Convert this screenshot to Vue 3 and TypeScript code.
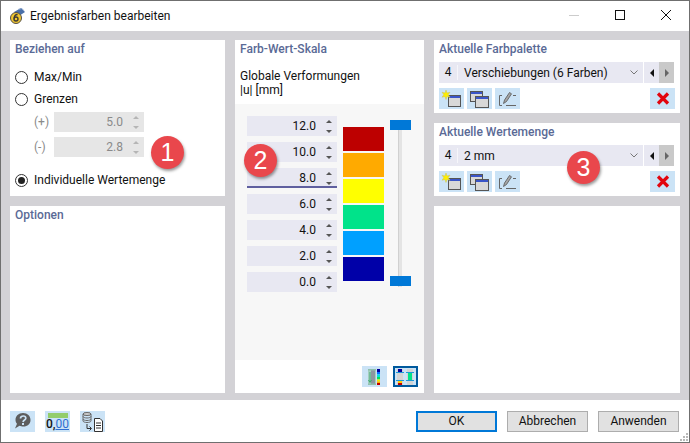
<script setup lang="ts">
const scale = [
  { value: '12.0' },
  { value: '10.0' },
  { value: '8.0', active: true },
  { value: '6.0' },
  { value: '4.0' },
  { value: '2.0' },
  { value: '0.0' }
]
const colors = ['#bd0000', '#ffaa00', '#ffff00', '#00e38a', '#00a0ff', '#0000a8']
const pickers = [
  { title: 'Aktuelle Farbpalette', no: '4', name: 'Verschiebungen (6 Farben)' },
  { title: 'Aktuelle Wertemenge', no: '4', name: '2 mm' }
]
</script>

<template>
  <div class="window">
    <header class="titlebar">
      <svg class="app-icon" width="18" height="18" viewBox="0 0 18 18">
        <path d="M5 5 L12 1 L16 5 L10 9 Z" fill="#4a6fa8" />
        <path d="M9 2.5 L13 1.5 L15 4" fill="none" stroke="#8fa9cf" />
        <circle cx="7" cy="11" r="5.5" fill="#f0c62e" stroke="#55504a" />
        <circle cx="7" cy="12" r="2" fill="none" stroke="#3c3a36" stroke-width="1.4" />
        <path d="M5.2 11.5 C5.2 8.5 7 7.5 8.6 7.5" fill="none" stroke="#3c3a36" stroke-width="1.4" />
      </svg>
      <span class="title">Ergebnisfarben bearbeiten</span>
      <div class="win-buttons">
        <svg width="10" height="10" viewBox="0 0 10 10" class="win-min"><path d="M0 5.5H10" stroke="#cccccc" /></svg>
        <svg width="10" height="10" viewBox="0 0 10 10" class="win-max"><rect x="0.5" y="0.5" width="9" height="9" fill="none" stroke="#111" /></svg>
        <svg width="10" height="10" viewBox="0 0 10 10" class="win-close"><path d="M0 0L10 10M10 0L0 10" stroke="#111" /></svg>
      </div>
    </header>

    <main class="content">
      <div class="col col-left">
        <section class="panel refer">
          <h3>Beziehen auf</h3>
          <label class="radio first"><i class="dot"></i>Max/Min</label>
          <label class="radio"><i class="dot"></i>Grenzen</label>
          <div class="limit first-limit">
            <span>(+)</span>
            <div class="field disabled">5.0<span class="spin"><b class="up"></b><b class="down"></b></span></div>
          </div>
          <div class="limit">
            <span>(-)</span>
            <div class="field disabled">2.8<span class="spin"><b class="up"></b><b class="down"></b></span></div>
          </div>
          <label class="radio last"><i class="dot on"></i>Individuelle Wertemenge</label>
        </section>
        <section class="panel grow">
          <h3>Optionen</h3>
        </section>
      </div>

      <section class="panel col-mid">
        <h3>Farb-Wert-Skala</h3>
        <div class="scale-head">Globale Verformungen<br />|u| [mm]</div>
        <div class="scale-area">
          <div class="values">
            <div v-for="row in scale" :key="row.value" class="field" :class="{ active: row.active }">
              {{ row.value }}<span class="spin"><b class="up"></b><b class="down"></b></span>
            </div>
          </div>
          <div class="bars">
            <div v-for="c in colors" :key="c" class="bar" :style="{ background: c }"></div>
          </div>
          <div class="slider">
            <div class="track"></div>
            <div class="handle top"></div>
            <div class="handle bottom"></div>
          </div>
        </div>
        <div class="scale-tools">
          <button class="tool">
            <svg width="21" height="20" viewBox="0 0 21 20">
              <rect x="4" y="2" width="8" height="16" fill="#a5cfc0" />
              <rect x="7" y="2" width="4" height="16" fill="#8c97a0" />
              <path d="M6 5V15M4.500 13L6 15.500L7.500 13" stroke="#3fa873" fill="none" />
              <rect x="4" y="2" width="8" height="1.500" fill="#8fc0ac" />
              <rect x="4" y="16.500" width="8" height="1.500" fill="#8fc0ac" />
              <rect x="13" y="2" width="3" height="3" fill="#00009e" />
              <rect x="13" y="5" width="3" height="2.500" fill="#0070ff" />
              <rect x="13" y="7.500" width="3" height="2.500" fill="#00e0e0" />
              <rect x="13" y="10" width="3" height="2.500" fill="#00e060" />
              <rect x="13" y="12.500" width="3" height="2" fill="#eeee00" />
              <rect x="13" y="14.500" width="3" height="1.500" fill="#ffaa00" />
              <rect x="13" y="16" width="3" height="2" fill="#c00000" />
            </svg>
          </button>
          <button class="tool selected">
            <svg width="21" height="20" viewBox="0 0 21 20">
              <rect x="2" y="2" width="6" height="16" fill="#d4d4d4" />
              <rect x="12" y="2" width="6" height="16" fill="#d4d4d4" />
              <rect x="3" y="2" width="4" height="3" fill="#00009e" />
              <rect x="3" y="14" width="4" height="2" fill="#ffcc00" />
              <rect x="3" y="16" width="4" height="2" fill="#c00000" />
              <rect x="13" y="6" width="4" height="7" fill="#00e38a" />
              <path d="M1 5.500H9M1 13.500H9M11 5.500H19M11 13.500H19" stroke="#1c9ad8" />
            </svg>
          </button>
        </div>
      </section>

      <div class="col col-right">
        <section v-for="p in pickers" :key="p.title" class="panel picker">
          <h3>{{ p.title }}</h3>
          <div class="combo-row">
            <div class="combo">
              <span class="no">{{ p.no }}</span>
              <span class="name">{{ p.name }}</span>
              <svg width="8" height="5" viewBox="0 0 8 5" class="caret"><path d="M0.500 0.500L4 4L7.500 0.500" fill="none" stroke="#777" /></svg>
            </div>
            <div class="step"><b class="left"></b></div>
            <div class="step off"><b class="right"></b></div>
          </div>
          <div class="tool-row">
            <button class="tool">
              <svg width="21" height="20" viewBox="0 0 21 20">
                <rect x="7.500" y="6.500" width="12" height="11" fill="#d8d8d8" stroke="#555" />
                <rect x="8" y="7" width="11" height="2" fill="#3a55c8" />
                <path d="M5 1L6 4L9 3.200L7.200 5.700L9 8.200L6 7.500L5 10.500L4 7.500L1 8.200L2.800 5.700L1 3.200L4 4Z" fill="#ffee00" stroke="#c9c25a" stroke-width="0.500" />
              </svg>
            </button>
            <button class="tool">
              <svg width="21" height="20" viewBox="0 0 21 20">
                <rect x="1.500" y="2.500" width="12" height="10" fill="#d8d8d8" stroke="#555" />
                <rect x="2" y="3" width="11" height="2" fill="#3a55c8" />
                <rect x="6.500" y="7.500" width="13" height="11" fill="#d8d8d8" stroke="#555" />
                <rect x="7" y="8" width="12" height="2" fill="#3a55c8" />
              </svg>
            </button>
            <button class="tool">
              <svg width="21" height="20" viewBox="0 0 21 20">
                <path d="M5 6.500H2.500V16.500H5M9 16.500H19M16 6.500H19" fill="none" stroke="#666" />
                <path d="M6.500 14.500L7.500 11L12.500 3.500L14.500 4.800L9.500 12.500Z" fill="#a6a6a6" stroke="#555" stroke-width="0.800" />
              </svg>
            </button>
            <button class="tool del">
              <svg width="14" height="13" viewBox="0 0 14 13"><path d="M2 1.500L12 11.500M12 1.500L2 11.500" stroke="#e2060f" stroke-width="3.200" /></svg>
            </button>
          </div>
        </section>
        <section class="panel grow"></section>
      </div>
    </main>

    <footer class="footer">
      <button class="tool">
        <svg width="21" height="20" viewBox="0 0 21 20">
          <path d="M11 2C15.500 2 18.500 5 18.500 9C18.500 13 15.500 15.500 11.500 15.500C10 15.500 8.500 15.200 7.500 14.700L3 17.500L5 12.800C4 11.700 3.500 10.500 3.500 9C3.500 5 6.500 2 11 2Z" fill="#5d5d5d" />
          <path d="M8.500 7.500C8.500 6 9.700 5 11.200 5C12.800 5 13.800 6 13.800 7.200C13.800 9 11.300 9 11 11" fill="none" stroke="#cbe3f6" stroke-width="1.700" />
          <rect x="10" y="12" width="2" height="2" fill="#cbe3f6" />
        </svg>
      </button>
      <button class="tool num">
        <span class="ruler"></span>
        <span class="digits">0,<u>00</u></span>
      </button>
      <button class="tool">
        <svg width="23" height="21" viewBox="0 0 23 21">
          <ellipse cx="6" cy="3" rx="4" ry="1.500" fill="#cfcfcf" stroke="#666" />
          <path d="M2 3V10C2 10.800 4 11.500 6 11.500C8 11.500 10 10.800 10 10V3M2 5.500C2 6.300 4 7 6 7C8 7 10 6.300 10 5.500M2 8C2 8.800 4 9.500 6 9.500C8 9.500 10 8.800 10 8" fill="none" stroke="#666" />
          <path d="M6 13V17.500H10M8.500 15.500L10.500 17.500L8.500 19.500" fill="none" stroke="#333" />
          <path d="M13.500 7.500H19L21.500 10V20.500H13.500Z" fill="#fff" stroke="#333" />
          <path d="M15 12H20M15 14.500H20M15 17H20" stroke="#333" />
        </svg>
      </button>
      <div class="spacer"></div>
      <button class="btn default">OK</button>
      <button class="btn">Abbrechen</button>
      <button class="btn">Anwenden</button>
      <svg class="grip" width="10" height="10" viewBox="0 0 10 10">
        <path d="M7 1h2v2H7zM4 4h2v2H4zM7 4h2v2H7zM1 7h2v2H1zM4 7h2v2H4zM7 7h2v2H7z" fill="#b8b8b8" />
      </svg>
    </footer>

    <div class="marker m1">1</div>
    <div class="marker m2">2</div>
    <div class="marker m3">3</div>
  </div>
</template>

<style>
html,
body {
  margin: 0;
  background: #fff;
}
</style>

<style scoped>
.window {
  position: relative;
  box-sizing: border-box;
  width: 690px;
  height: 443px;
  border: 1px solid #6f6f6f;
  display: flex;
  flex-direction: column;
  background: #d3d2d6;
  font-family: Roboto, 'Noto Sans', sans-serif;
  font-size: 12px;
  color: #111;
  overflow: hidden;
}
.titlebar {
  height: 30px;
  flex: none;
  background: #fff;
  display: flex;
  align-items: center;
  padding-left: 8px;
}
.app-icon {
  margin-right: 3px;
}
.title {
  font-size: 12px;
}
.win-buttons {
  margin-left: auto;
  display: flex;
  align-items: center;
  padding: 0 18px 2px 0;
  gap: 36px;
}
.content {
  flex: 1;
  display: grid;
  grid-template-columns: 215px 189px 246px;
  gap: 10px;
  padding: 9px 9px 7px 9px;
  min-height: 0;
}
.col {
  display: flex;
  flex-direction: column;
  gap: 10px;
  min-height: 0;
}
.panel {
  background: #fff;
  padding: 2px 5px;
  box-sizing: border-box;
}
.grow {
  flex: 1;
}
h3 {
  margin: 0 0 1px;
  font-size: 12px;
  font-weight: 500;
  line-height: 15px;
  color: #5a6a96;
}
.refer {
  height: 156px;
}
.radio {
  display: flex;
  align-items: center;
  height: 16px;
  margin-top: 6px;
}
.radio.first {
  margin-top: 12px;
}
.radio.last {
  margin-top: 15px;
}
.dot {
  box-sizing: border-box;
  width: 13px;
  height: 13px;
  border: 1px solid #333;
  border-radius: 50%;
  margin-right: 6px;
  display: flex;
  align-items: center;
  justify-content: center;
  background: #fff;
}
.dot.on::after {
  content: '';
  width: 7px;
  height: 7px;
  border-radius: 50%;
  background: #222;
}
.limit {
  display: flex;
  align-items: center;
  justify-content: space-between;
  width: 110px;
  margin-left: 19px;
  margin-top: 5px;
  color: #8a8a8a;
}
.first-limit {
  margin-top: 5px;
}
.field {
  box-sizing: border-box;
  width: 90px;
  height: 20px;
  background: #e8e8f2;
  display: flex;
  align-items: center;
  justify-content: flex-end;
  position: relative;
  padding-right: 21px;
  line-height: 20px;
}
.field.disabled {
  background: #e6e6e6;
  color: #8a8a8a;
}
.field.active {
  box-shadow: inset 0 -2px 0 #5f5f9f;
}
.spin {
  position: absolute;
  right: 4px;
  top: 4px;
  width: 7px;
  height: 13px;
}
.spin b {
  position: absolute;
  left: 0;
  width: 0;
  height: 0;
  border-left: 3px solid transparent;
  border-right: 3px solid transparent;
}
.spin .up {
  top: 0;
  border-bottom: 3px solid #555;
}
.spin .down {
  bottom: 0;
  border-top: 3px solid #555;
}
.disabled .spin .up {
  border-bottom-color: #b5b5b5;
}
.disabled .spin .down {
  border-top-color: #b5b5b5;
}
.col-mid {
  padding: 2px 0 0;
  display: flex;
  flex-direction: column;
}
.col-mid h3 {
  padding-left: 5px;
}
.scale-head {
  padding: 11px 0 0 5px;
  line-height: 14px;
  height: 35px;
  box-sizing: content-box;
}
.scale-area {
  flex: 1;
  background: #f7f7f7;
  display: flex;
  align-items: flex-start;
  padding: 12px 0 0 12px;
}
.values {
  display: flex;
  flex-direction: column;
  gap: 6px;
}
.bars {
  margin: 11px 0 0 6px;
  display: flex;
  flex-direction: column;
  gap: 2px;
}
.bar {
  width: 41px;
  height: 24px;
}
.slider {
  position: relative;
  margin: 4px 0 0 6px;
  width: 21px;
  height: 167px;
}
.track {
  position: absolute;
  left: 8px;
  top: 6px;
  bottom: 0;
  width: 4px;
  background: #e4e4e4;
  border-left: 1px solid #d0d0d0;
  box-sizing: border-box;
}
.handle {
  position: absolute;
  left: 0;
  width: 21px;
  height: 10px;
  background: #0078d7;
}
.handle.top {
  top: 0;
}
.handle.bottom {
  top: 156px;
}
.scale-tools {
  display: flex;
  justify-content: flex-end;
  gap: 6px;
  padding: 6px 6px 6px 0;
}
button {
  padding: 0;
  border: 0;
  font: inherit;
  color: inherit;
}
.tool {
  box-sizing: border-box;
  width: 25px;
  height: 21px;
  background: #cbe3f6;
  display: flex;
  align-items: center;
  justify-content: center;
  flex: none;
}
.tool.selected {
  border: 2px solid #005a9e;
}
.picker {
  height: 73px;
  flex: none;
}
.combo-row {
  display: flex;
  margin-top: 5px;
  height: 21px;
}
.combo {
  flex: none;
  width: 204px;
  background: #e8e8f2;
  display: flex;
  align-items: center;
  position: relative;
}
.no {
  width: 18px;
  text-align: center;
  border-right: 1px solid #f6f6fa;
  line-height: 15px;
}
.name {
  padding-left: 6px;
}
.caret {
  position: absolute;
  right: 5px;
  top: 8px;
}
.step {
  width: 15px;
  margin-left: 1px;
  background: #e8e8f2;
  display: flex;
  align-items: center;
  justify-content: center;
}
.step.off {
  margin-left: 0;
  background: #c9c9c9;
}
.step b {
  width: 0;
  height: 0;
  border-top: 4px solid transparent;
  border-bottom: 4px solid transparent;
}
.step .left {
  border-right: 4px solid #111;
}
.step .right {
  border-left: 4px solid #666;
}
.tool-row {
  display: flex;
  gap: 3px;
  margin-top: 5px;
}
.del {
  margin-left: auto;
}
.footer {
  height: 42px;
  flex: none;
  background: #fff;
  display: flex;
  align-items: center;
  padding: 0 10px 0 9px;
  gap: 10px;
  position: relative;
}
.num {
  flex-direction: column;
  justify-content: flex-start;
}
.ruler {
  width: 20px;
  height: 5px;
  margin-top: 2px;
  background: #93cd6b;
}
.digits {
  font-size: 12px;
  font-weight: 500;
  line-height: 13px;
}
.digits u {
  color: #2f6fd0;
  font-weight: 400;
}
.spacer {
  flex: 1;
}
.btn {
  box-sizing: border-box;
  width: 81px;
  height: 21px;
  background: #e1e1e1;
  border: 1px solid #adadad;
  line-height: 17px;
}
.btn.default {
  border: 2px solid #0078d7;
}
.grip {
  position: absolute;
  right: 0;
  bottom: 0;
}
.marker {
  position: absolute;
  width: 33px;
  height: 33px;
  border-radius: 50%;
  background: #e9474c;
  color: #fff;
  font-family: 'Liberation Sans', sans-serif;
  font-size: 25px;
  line-height: 33px;
  text-align: center;
  box-shadow: 1px 2px 3px rgba(0, 0, 0, 0.4);
}
.m1 {
  left: 150px;
  top: 135px;
}
.m2 {
  left: 243px;
  top: 143px;
}
.m3 {
  left: 566px;
  top: 150px;
}
</style>
